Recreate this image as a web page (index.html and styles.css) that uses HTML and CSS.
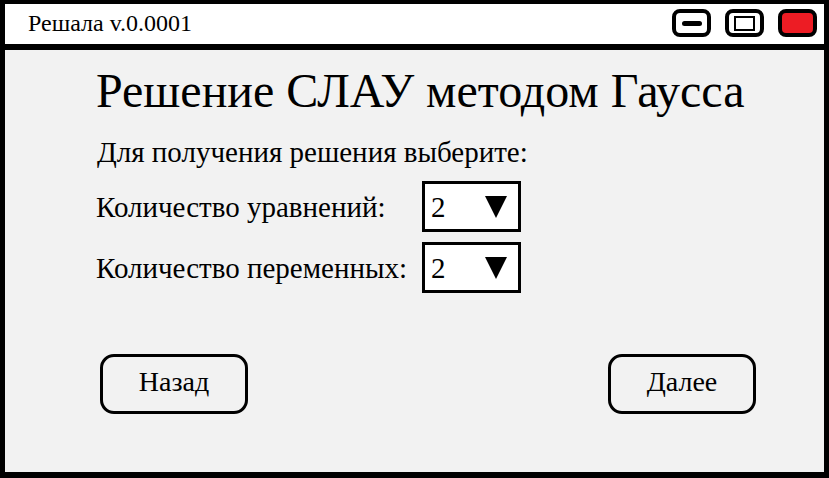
FILE: index.html
```html
<!DOCTYPE html>
<html lang="ru">
<head>
<meta charset="utf-8">
<title>Решала</title>
<link rel="stylesheet" href="styles.css">
</head>
<body>
<div class="window">
  <div class="titlebar">
    <span class="app-title">Решала v.0.0001</span>
    <div class="controls">
      <div class="ctl ctl-min"><span class="bar"></span></div>
      <div class="ctl ctl-max"><span class="box"></span></div>
      <div class="ctl ctl-close"></div>
    </div>
  </div>
  <div class="content">
    <h1 class="heading">Решение СЛАУ методом Гаусса</h1>
    <p class="lead">Для получения решения выберите:</p>
    <div class="form">
      <span class="label">Количество уравнений:</span>
      <div class="select"><span class="val">2</span><span class="arrow"></span></div>
      <span class="label">Количество переменных:</span>
      <div class="select"><span class="val">2</span><span class="arrow"></span></div>
    </div>
    <div class="actions">
      <div class="btn">Назад</div>
      <div class="btn">Далее</div>
    </div>
  </div>
</div>
</body>
</html>
```
FILE: styles.css
```css
* { box-sizing: border-box; }
html, body { margin: 0; padding: 0; background: #fff; }
body { font-family: "Liberation Serif", "Times New Roman", serif; color: #000; }
.window {
  width: 829px; height: 478px;
  border: 5px solid #000;
  border-top-width: 4px;
  border-bottom-width: 6px;
  display: flex; flex-direction: column;
  background: #f2f2f2;
}
.titlebar {
  height: 46px;
  background: #fff;
  border-bottom: 6px solid #000;
  display: flex; align-items: center; justify-content: space-between;
  padding: 0 7px 2px 23px;
}
.app-title { font-size: 24px; line-height: 28px; }
.controls { display: flex; gap: 14px; }
.ctl {
  width: 39px; height: 28px;
  border: 4px solid #000; border-radius: 8px;
  background: #fff;
  display: flex; align-items: center; justify-content: center;
}
.ctl-min .bar { width: 20px; height: 5px; background: #000; border-radius: 3px; }
.ctl-max .box { width: 21px; height: 15px; border: 2px solid #000; }
.ctl-close { background: #ed1c24; }
.content { flex: 1; padding: 13px 0 0 91px; }
.heading { margin: 0; font-weight: normal; font-size: 48px; line-height: 56px; }
.lead { margin: 18px 0 0 1px; font-size: 29px; line-height: 30px; }
.form {
  display: grid; grid-template-columns: 326px 99px;
  row-gap: 10px; align-items: center;
  margin-top: 14px;
}
.label { font-size: 29px; line-height: 32px; }
.select {
  height: 51px;
  border: 3px solid #000; background: #fff;
  display: flex; align-items: center; justify-content: space-between;
  padding: 0 11px 0 6px;
}
.val { font-size: 29px; line-height: 32px; }
.arrow {
  width: 0; height: 0;
  border-left: 11px solid transparent; border-right: 11px solid transparent;
  border-top: 22px solid #000;
}
.actions {
  display: flex; justify-content: space-between;
  margin-top: 61px; padding-right: 68px; padding-left: 4px;
}
.btn {
  width: 148px; height: 60px;
  border: 3px solid #000; border-radius: 14px;
  display: flex; align-items: center; justify-content: center;
  font-size: 28px; padding-bottom: 5px;
}
```
